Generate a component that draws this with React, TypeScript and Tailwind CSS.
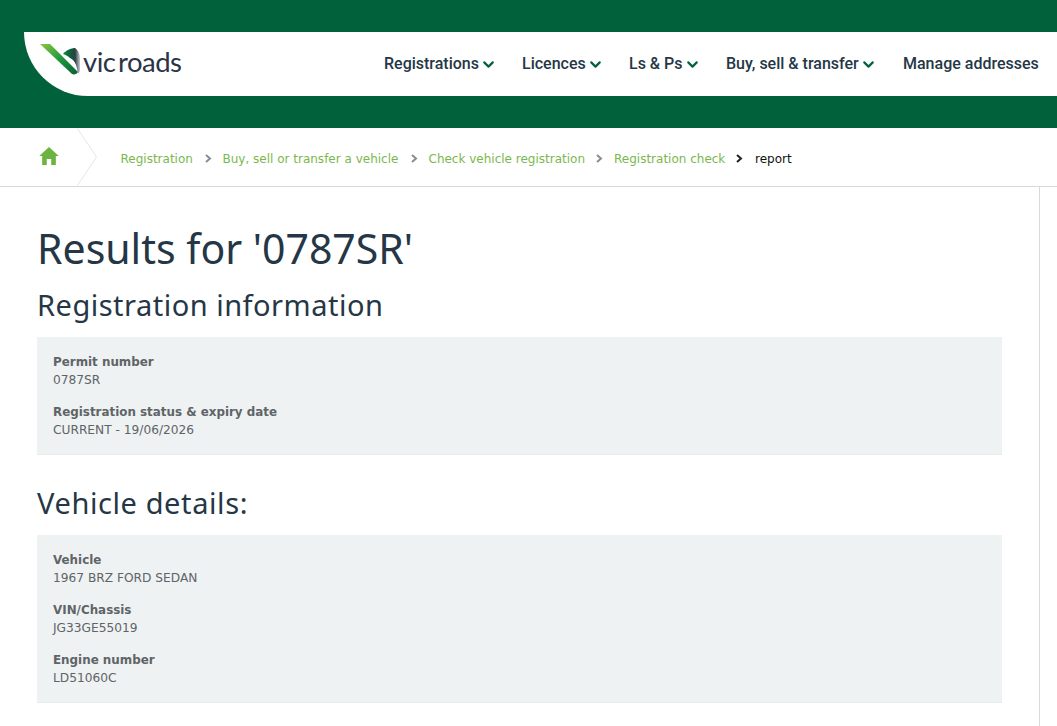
import { LuChevronDown } from "react-icons/lu";
import { IoMdHome } from "react-icons/io";

const navItems = [
    { label: "Registrations", arrow: true, cls: "w-[138px]" },
    { label: "Licences", arrow: true, cls: "w-[107px]" },
    { label: "Ls & Ps", arrow: true, cls: "w-[97px]" },
    { label: "Buy, sell & transfer", arrow: true, cls: "w-[177px]" },
    { label: "Manage addresses", arrow: false, cls: "" },
];

const crumbs = [
    { label: "Registration", cls: "w-[102px]", arrow: true },
    { label: "Buy, sell or transfer a vehicle", cls: "w-[206px]", arrow: true },
    { label: "Check vehicle registration", cls: "w-[185.5px]", arrow: true },
    { label: "Registration check", cls: "w-[122px]", arrow: false },
];

const Chevron = ({ color }: { color: string }) => (
    <svg width="7" height="9" viewBox="0 0 7 9" className="shrink-0">
        <path d="M1 1L5 4.5L1 8" fill="none" stroke={color} strokeWidth="2" />
    </svg>
);

const Logo = () => (
    <div className="flex items-center -mt-[11px]">
        <svg width="44" height="34" viewBox="0 0 44 34" className="shrink-0">
            <defs>
                <linearGradient id="band" x1="0" y1="0" x2="1" y2="1">
                    <stop offset="0" stopColor="#8cc63f" />
                    <stop offset="0.5" stopColor="#1f9a3e" />
                    <stop offset="1" stopColor="#0a5f38" />
                </linearGradient>
                <linearGradient id="fold" x1="0" y1="0" x2="1" y2="0">
                    <stop offset="0" stopColor="#0c8a40" />
                    <stop offset="0.5" stopColor="#0f5a3a" />
                    <stop offset="0.72" stopColor="#2f3f48" />
                    <stop offset="1" stopColor="#c9cfd2" />
                </linearGradient>
            </defs>
            <path d="M0 2H10L38 30C37 32 34 33 32 32Z" fill="url(#band)" />
            <path d="M23 12C26 8 32 6 35 6C38 8 40 12 40 16V29L38 32C37 25 36 19 30 16C28 14 26 13 23 12Z" fill="url(#fold)" />
        </svg>
        <span className="ml-[-1px] mt-[6px] font-['Lato',sans-serif] text-[27.5px] leading-none tracking-[-0.5px] [word-spacing:-4px] text-[#2b3445]">vic roads</span>
    </div>
);

const Field = ({ label, value }: { label: string; value: string }) => (
    <div className="font-['DejaVu_Sans',sans-serif] leading-[18px] text-[#5f6467]">
        <p className="font-bold text-[11.9px]">{label}</p>
        <p className="text-[12.2px]">{value}</p>
    </div>
);

const App: React.FC = () => {
    return (
        <div className="h-[726px] overflow-hidden flex flex-col bg-white">
            <header className="h-[128px] shrink-0 bg-[#00613a] pt-8 pl-6">
                <div className="h-16 bg-white rounded-bl-[64px] flex items-center pl-4">
                    <div className="w-[344px]">
                        <Logo />
                    </div>
                    <nav className="flex items-center font-['Roboto',sans-serif] font-medium text-[16px] text-[#253746]">
                        {navItems.map((item) => (
                            <div key={item.label} className={`flex items-center whitespace-nowrap ${item.cls}`}>
                                {item.label}
                                {item.arrow && <LuChevronDown className="ml-[1px] w-[17px] h-[17px] text-[#00613a]" strokeWidth={3} />}
                            </div>
                        ))}
                    </nav>
                </div>
            </header>

            <div className="relative h-[59px] shrink-0 border-b border-[#d9d9d9] flex items-center pl-[120.5px] pt-[3px] font-['DejaVu_Sans',sans-serif] text-[12px]">
                <IoMdHome className="absolute left-[37px] top-[16px] w-6 h-6 text-[#6cb33f]" />
                <svg width="22" height="58" viewBox="0 0 22 58" className="absolute left-[77px] top-0">
                    <path d="M0 0L19.5 29L0 58" fill="none" stroke="#e4e6e4" strokeWidth="1" />
                </svg>
                {crumbs.map((crumb) => (
                    <div key={crumb.label} className={`flex items-center justify-between whitespace-nowrap ${crumb.arrow ? "pr-[11px]" : ""} ${crumb.cls}`}>
                        <span className="text-[#7ab84e]">{crumb.label}</span>
                        {crumb.arrow && <Chevron color="#8a8d8f" />}
                    </div>
                ))}
                <Chevron color="#222222" />
                <span className="ml-[12px] text-[#111111]">report</span>
            </div>

            <main className="w-[1040px] flex-1 border-r border-[#d9d9d9] pl-[37px] pr-[37px]">
                <h1 className="mt-[34px] font-['Noto_Sans',sans-serif] text-[41px] leading-[54px] text-[#253746]">Results for '0787SR'</h1>
                <h2 className="mt-[12px] font-['Noto_Sans',sans-serif] text-[29px] tracking-[0.5px] leading-[36px] text-[#253746]">Registration information</h2>
                <section className="mt-[14px] h-[118px] bg-[#eef2f3] border-b border-[#e6eaeb] px-4 pt-[16px] flex flex-col gap-[14px]">
                    <Field label="Permit number" value="0787SR" />
                    <Field label="Registration status & expiry date" value="CURRENT - 19/06/2026" />
                </section>
                <h2 className="mt-[30px] font-['Noto_Sans',sans-serif] text-[29px] tracking-[0.6px] leading-[36px] text-[#253746]">Vehicle details:</h2>
                <section className="mt-[14px] h-[168px] bg-[#eef2f3] border-b border-[#e6eaeb] px-4 pt-[16px] flex flex-col gap-[14px]">
                    <Field label="Vehicle" value="1967 BRZ FORD SEDAN" />
                    <Field label="VIN/Chassis" value="JG33GE55019" />
                    <Field label="Engine number" value="LD51060C" />
                </section>
            </main>
        </div>
    );
};

export default App;
